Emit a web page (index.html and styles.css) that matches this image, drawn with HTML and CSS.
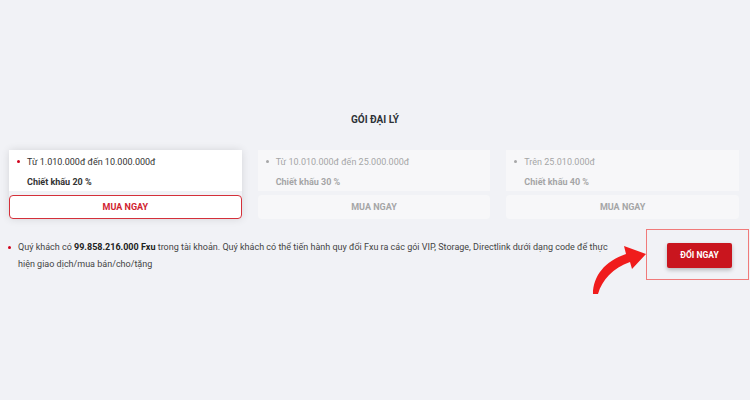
FILE: index.html
```html
<!DOCTYPE html>
<html lang="vi">
<head>
    <meta charset="UTF-8">
    <meta name="viewport" content="width=device-width, initial-scale=1.0">
    <title>Gói đại lý</title>
    <link rel="stylesheet" href="styles.css">
</head>
<body>
    <div class="content">
        <h2 class="title">GÓI ĐẠI LÝ</h2>

        <div class="plans">
            <div class="plan active">
                <div class="plan-info">
                    <div class="plan-range"><span class="dot"></span>Từ 1.010.000đ đến 10.000.000đ</div>
                    <div class="plan-discount">Chiết khấu 20 %</div>
                </div>
                <button class="buy-btn">MUA NGAY</button>
            </div>
            <div class="plan">
                <div class="plan-info">
                    <div class="plan-range"><span class="dot"></span>Từ 10.010.000đ đến 25.000.000đ</div>
                    <div class="plan-discount">Chiết khấu 30 %</div>
                </div>
                <button class="buy-btn">MUA NGAY</button>
            </div>
            <div class="plan">
                <div class="plan-info">
                    <div class="plan-range"><span class="dot"></span>Trên 25.010.000đ</div>
                    <div class="plan-discount">Chiết khấu 40 %</div>
                </div>
                <button class="buy-btn">MUA NGAY</button>
            </div>
        </div>

        <div class="exchange">
            <div class="exchange-text">
                <span class="dot"></span>
                <p>Quý khách có <b>99.858.216.000 Fxu</b> trong tài khoản. Quý khách có thể tiến hành quy đổi Fxu ra các gói VIP, Storage, Directlink dưới dạng code để thực hiện giao dịch/mua bán/cho/tặng</p>
            </div>
            <div class="exchange-box">
                <button class="exchange-btn">ĐỔI NGAY</button>
            </div>
            <svg class="arrow" width="66" height="62" viewBox="0 0 66 62">
                <path d="M8 54 C8 36, 20 21, 41 14 L39 6 L61 14 L47 29 L45 22 C28 28, 17 40, 13 54 Z" fill="#f01c1c"/>
            </svg>
        </div>
    </div>
</body>
</html>
```

FILE: styles.css
```css
body {
    font-family: Roboto, 'Liberation Sans', sans-serif;
    background: #f1f2f6;
    color: #333;
    margin: 0;
    padding: 0;
    min-height: 100vh;
}
.content {
    padding-top: 114px;
    padding-bottom: 40px;
}
.title {
    margin: 0 0 24px;
    font-size: 10px;
    line-height: 12px;
    font-weight: bold;
    text-align: center;
    color: #2e3338;
}
.plans {
    display: grid;
    grid-template-columns: repeat(3, 1fr);
    gap: 16px;
    padding: 0 11px 0 9px;
}
.plan {
    display: flex;
    flex-direction: column;
    gap: 4px;
    opacity: 0.7;
}
.plan.active {
    opacity: 1;
    box-shadow: 0 0 8px rgba(0, 0, 0, 0.12);
    border-radius: 4px;
}
.plan-info {
    background: #fafafb;
    padding: 6px 8px 3px 8px;
    font-size: 9px;
    line-height: 12px;
    color: #858585;
}
.plan.active .plan-info {
    background: #ffffff;
    color: #333;
}
.dot {
    display: inline-block;
    width: 3px;
    height: 3px;
    border-radius: 50%;
    background: #888;
    margin-right: 7px;
    vertical-align: middle;
    position: relative;
    top: -1px;
}
.plan.active .dot,
.exchange .dot {
    background: #d0021b;
}
.plan-discount {
    margin-top: 8px;
    padding-left: 10px;
    font-weight: bold;
}
.buy-btn {
    height: 24px;
    border: 1px solid transparent;
    border-radius: 4px;
    background: #fafafb;
    font-family: inherit;
    font-size: 9px;
    font-weight: bold;
    color: #858585;
    cursor: pointer;
}
.plan.active .buy-btn {
    background: #ffffff;
    border-color: #d4303a;
    color: #d0232f;
}
.exchange {
    position: relative;
    display: flex;
    align-items: flex-start;
    margin-top: 10px;
    padding-left: 8px;
}
.exchange-text {
    flex: 1;
    display: flex;
    align-items: flex-start;
    margin: 10px 24px 0 0;
}
.exchange-text .dot {
    flex: none;
    margin-top: 7px;
    top: 0;
}
.exchange-text p {
    margin: 0;
    font-size: 9px;
    line-height: 17px;
    color: #444;
}
.exchange-text b {
    color: #222;
}
.exchange-box {
    box-sizing: border-box;
    width: 103px;
    height: 51px;
    margin-right: 1px;
    border: 1px solid #f07a7a;
    display: flex;
    align-items: center;
    justify-content: center;
    padding: 1px 0 0 4px;
}
.exchange-btn {
    width: 65px;
    height: 25px;
    border: none;
    border-radius: 2px;
    background: #c9151e;
    color: #ffffff;
    font-family: inherit;
    font-size: 8.5px;
    font-weight: bold;
    box-shadow: 0 2px 4px rgba(0, 0, 0, 0.25);
    cursor: pointer;
}
.arrow {
    position: absolute;
    left: 585px;
    top: 11px;
}
```
